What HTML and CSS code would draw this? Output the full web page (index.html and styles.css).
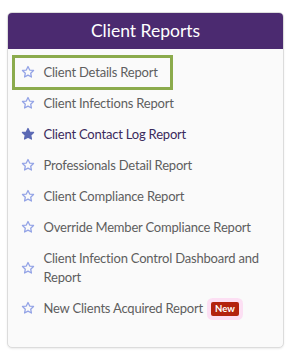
FILE: index.html
```html
<!DOCTYPE html>
<html lang="en">
<head>
    <meta charset="UTF-8">
    <title>Client Reports</title>
    <link rel="stylesheet" href="styles.css">
</head>
<body>
    <div class="card">
        <div class="card-header">Client Reports</div>
        <ul class="report-list">
            <li class="report selected">
                <svg class="star" viewBox="0 0 24 24"><path d="M12 2.5l2.9 6.1 6.6.8-4.9 4.6 1.3 6.6L12 17.3l-5.9 3.3 1.3-6.6-4.9-4.6 6.6-.8z"/></svg>
                <span>Client Details Report</span>
            </li>
            <li class="report">
                <svg class="star" viewBox="0 0 24 24"><path d="M12 2.5l2.9 6.1 6.6.8-4.9 4.6 1.3 6.6L12 17.3l-5.9 3.3 1.3-6.6-4.9-4.6 6.6-.8z"/></svg>
                <span>Client Infections Report</span>
            </li>
            <li class="report active">
                <svg class="star" viewBox="0 0 24 24"><path d="M12 2.5l2.9 6.1 6.6.8-4.9 4.6 1.3 6.6L12 17.3l-5.9 3.3 1.3-6.6-4.9-4.6 6.6-.8z"/></svg>
                <span>Client Contact Log Report</span>
            </li>
            <li class="report">
                <svg class="star" viewBox="0 0 24 24"><path d="M12 2.5l2.9 6.1 6.6.8-4.9 4.6 1.3 6.6L12 17.3l-5.9 3.3 1.3-6.6-4.9-4.6 6.6-.8z"/></svg>
                <span>Professionals Detail Report</span>
            </li>
            <li class="report">
                <svg class="star" viewBox="0 0 24 24"><path d="M12 2.5l2.9 6.1 6.6.8-4.9 4.6 1.3 6.6L12 17.3l-5.9 3.3 1.3-6.6-4.9-4.6 6.6-.8z"/></svg>
                <span>Client Compliance Report</span>
            </li>
            <li class="report">
                <svg class="star" viewBox="0 0 24 24"><path d="M12 2.5l2.9 6.1 6.6.8-4.9 4.6 1.3 6.6L12 17.3l-5.9 3.3 1.3-6.6-4.9-4.6 6.6-.8z"/></svg>
                <span>Override Member Compliance Report</span>
            </li>
            <li class="report">
                <svg class="star" viewBox="0 0 24 24"><path d="M12 2.5l2.9 6.1 6.6.8-4.9 4.6 1.3 6.6L12 17.3l-5.9 3.3 1.3-6.6-4.9-4.6 6.6-.8z"/></svg>
                <span>Client Infection Control Dashboard and Report</span>
            </li>
            <li class="report">
                <svg class="star" viewBox="0 0 24 24"><path d="M12 2.5l2.9 6.1 6.6.8-4.9 4.6 1.3 6.6L12 17.3l-5.9 3.3 1.3-6.6-4.9-4.6 6.6-.8z"/></svg>
                <span>New Clients Acquired Report <em class="badge">New</em></span>
            </li>
        </ul>
    </div>
</body>
</html>
```

FILE: styles.css
```css
body {
    margin: 0;
    padding: 12px 8px 6px 7px;
    background: #fff;
    font-family: Lato, "Liberation Sans", sans-serif;
}
.card {
    border: 1px solid #dcdcdc;
    border-radius: 5px;
    background: #fafafa;
    overflow: hidden;
    padding-bottom: 23px;
    box-shadow: 0 1px 2px rgba(0, 0, 0, 0.08);
}
.card-header {
    background: #4b2a70;
    color: #fff;
    text-align: center;
    font-size: 17.5px;
    height: 36px;
    line-height: 36px;
}
.report-list {
    list-style: none;
    margin: 0;
    padding: 7.5px 8px 0 5.5px;
}
.report {
    display: flex;
    align-items: center;
    gap: 9px;
    padding: 6px 8px 6px 7px;
    font-size: 13px;
    letter-spacing: -0.2px;
    line-height: 19px;
    color: #5e5e5e;
}
.report.selected {
    outline: 3px solid #8bab4c;
    outline-offset: -1.5px;
    width: fit-content;
    padding-right: 13px;
}
.report.active {
    color: #3b2a5c;
}
.star {
    width: 14px;
    height: 14px;
    flex: none;
    fill: none;
    stroke: #93a3e6;
    stroke-width: 2.2;
    stroke-linejoin: round;
}
.active .star {
    fill: #5b69b4;
    stroke: #5b69b4;
}
.badge {
    display: inline-block;
    margin-left: 5px;
    padding: 0 4px;
    background: #b3220e;
    color: #fff;
    font-style: normal;
    font-weight: bold;
    font-size: 9.5px;
    letter-spacing: 0;
    line-height: 14px;
    border-radius: 2px;
    vertical-align: 1px;
    box-shadow: 0 0 0 4px rgba(255, 190, 235, 0.45);
}
```
